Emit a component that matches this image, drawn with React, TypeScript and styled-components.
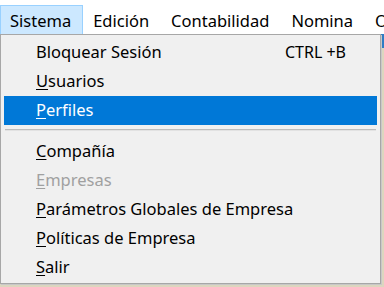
import React from "react";
import styled, { createGlobalStyle } from "styled-components";

const Global = createGlobalStyle`
  html, body { margin: 0; padding: 0; background: #ffffff; }
  body { font-family: "Noto Sans", "DejaVu Sans", sans-serif; }
`;

const Screen = styled.div`
  position: relative;
  width: 384px;
  height: 287px;
  overflow: hidden;
  display: flex;
  flex-direction: column;
  background: #ffffff;
`;

const MenuBar = styled.div`
  height: 34px;
  display: flex;
  align-items: stretch;
  padding-top: 5px;
  box-sizing: border-box;
  background: #ffffff;
  white-space: nowrap;
  overflow: hidden;
`;

const BarItem = styled.div<{ $active?: boolean }>`
  display: flex;
  align-items: center;
  padding: 1px 11px 0 9px;
  border: 1px solid ${(p) => (p.$active ? "#99d1ff" : "transparent")};
  border-bottom: none;
  background: ${(p) => (p.$active ? "#cce8ff" : "transparent")};
  font-size: 16.5px;
  color: #000;
  flex-shrink: 0;
`;

const Workspace = styled.div`
  flex: 1;
  display: flex;
  flex-direction: column;
  background: #dcd6bf;
`;

const WindowStrip = styled.div`
  height: 14px;
  background: #2f7cc4;
`;

const Dropdown = styled.div`
  position: absolute;
  left: 0;
  top: 34px;
  width: 381px;
  height: 250px;
  box-sizing: border-box;
  background: #f0f0f0;
  border: 1px solid #a7a7a7;
  box-shadow: 1px 1px 0 #c8c8c8;
  padding: 3px 3px 1px 3px;
  display: flex;
  flex-direction: column;
`;

const Item = styled.div<{ $selected?: boolean; $disabled?: boolean }>`
  height: 29px;
  display: flex;
  align-items: center;
  padding-left: 32px;
  padding-right: 31px;
  font-size: 16.5px;
  background: ${(p) => (p.$selected ? "#0078d7" : "transparent")};
  color: ${(p) => (p.$selected ? "#ffffff" : p.$disabled ? "#a0a0a0" : "#000000")};
  white-space: nowrap;
  padding-bottom: 2px;
  box-sizing: border-box;
`;

const Label = styled.span`
  flex: 1;
  u {
    text-decoration-thickness: 1px;
    text-underline-offset: 2px;
  }
`;

const Shortcut = styled.span`
  font-size: 16px;
`;

const Separator = styled.div`
  height: 12px;
  display: flex;
  align-items: center;
  padding: 0 1px;
  &::after {
    content: "";
    flex: 1;
    height: 1px;
    border-top: 1px solid #bcbcbc;
    background: #e2e2e2;
    margin-top: -2px;
  }
`;

type Entry =
  | { kind: "item"; acc?: string; rest: string; shortcut?: string; selected?: boolean; disabled?: boolean }
  | { kind: "sep" };

const entries: Entry[] = [
  { kind: "item", rest: "Bloquear Sesión", shortcut: "CTRL +B" },
  { kind: "item", acc: "U", rest: "suarios" },
  { kind: "item", acc: "P", rest: "erfiles", selected: true },
  { kind: "sep" },
  { kind: "item", acc: "C", rest: "ompañía" },
  { kind: "item", acc: "E", rest: "mpresas", disabled: true },
  { kind: "item", acc: "P", rest: "arámetros Globales de Empresa" },
  { kind: "item", acc: "P", rest: "olíticas de Empresa" },
  { kind: "item", acc: "S", rest: "alir" },
];

export default function App() {
  return (
    <>
      <Global />
      <Screen>
        <MenuBar>
          <BarItem $active>Sistema</BarItem>
          <BarItem>Edición</BarItem>
          <BarItem>Contabilidad</BarItem>
          <BarItem>Nomina</BarItem>
          <BarItem>Otros</BarItem>
        </MenuBar>
        <Workspace>
          <WindowStrip />
        </Workspace>
        <Dropdown>
          {entries.map((e, i) =>
            e.kind === "sep" ? (
              <Separator key={i} />
            ) : (
              <Item key={i} $selected={e.selected} $disabled={e.disabled}>
                <Label>
                  {e.acc && <u>{e.acc}</u>}
                  {e.rest}
                </Label>
                {e.shortcut && <Shortcut>{e.shortcut}</Shortcut>}
              </Item>
            )
          )}
        </Dropdown>
      </Screen>
    </>
  );
}
